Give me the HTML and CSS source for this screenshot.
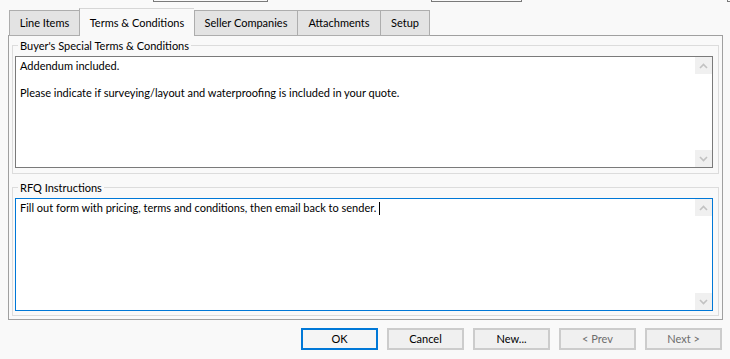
FILE: index.html
```html
<!DOCTYPE html>
<html lang="en">
<head>
    <meta charset="UTF-8">
    <title>RFQ - Terms &amp; Conditions</title>
    <link rel="stylesheet" href="styles.css">
</head>
<body>
    <div class="topbar">
        <div class="stub stub-a"></div>
        <div class="stub stub-b"></div>
        <div class="stub stub-c"></div>
    </div>

    <div class="tabs">
        <div class="tab-gap"></div>
        <div class="tab" style="width: 70px;">Line Items</div>
        <div class="tab active" style="width: 115px;">Terms &amp; Conditions</div>
        <div class="tab" style="width: 103px;">Seller Companies</div>
        <div class="tab" style="width: 83px;">Attachments</div>
        <div class="tab last" style="width: 50px;">Setup</div>
        <div class="tab-fill"></div>
    </div>

    <div class="panel">
        <fieldset class="group group-terms">
            <legend>Buyer's Special Terms &amp; Conditions</legend>
            <div class="memo">
                <div class="memo-text">Addendum included.<br><br>Please indicate if surveying/layout and waterproofing is included in your quote.</div>
                <div class="scroll">
                    <div class="arrow"><svg width="9" height="6" viewBox="0 0 9 6"><polyline points="1,5 4.5,1.5 8,5" fill="none" stroke="#c2c2c2" stroke-width="1.6"/></svg></div>
                    <div class="track"></div>
                    <div class="arrow"><svg width="9" height="6" viewBox="0 0 9 6"><polyline points="1,1 4.5,4.5 8,1" fill="none" stroke="#c2c2c2" stroke-width="1.6"/></svg></div>
                </div>
            </div>
        </fieldset>

        <fieldset class="group group-rfq">
            <legend>RFQ Instructions</legend>
            <div class="memo focused">
                <div class="memo-text">Fill out form with pricing, terms and conditions, then email back to sender. <span class="caret"></span></div>
                <div class="scroll">
                    <div class="arrow"><svg width="9" height="6" viewBox="0 0 9 6"><polyline points="1,5 4.5,1.5 8,5" fill="none" stroke="#c2c2c2" stroke-width="1.6"/></svg></div>
                    <div class="track"></div>
                    <div class="arrow"><svg width="9" height="6" viewBox="0 0 9 6"><polyline points="1,1 4.5,4.5 8,1" fill="none" stroke="#c2c2c2" stroke-width="1.6"/></svg></div>
                </div>
            </div>
        </fieldset>
    </div>

    <div class="buttons">
        <button class="btn default">OK</button>
        <button class="btn">Cancel</button>
        <button class="btn">New...</button>
        <button class="btn disabled">&lt; Prev</button>
        <button class="btn disabled">Next &gt;</button>
    </div>
</body>
</html>
```

FILE: styles.css
```css
body {
    margin: 0;
    background-color: #f9f9f9;
    font-family: Lato, "Liberation Sans", sans-serif;
    font-size: 11px;
    color: #000;
}
.topbar {
    display: flex;
    height: 2px;
    overflow: hidden;
}
.stub {
    height: 2px;
    box-sizing: border-box;
    border: 1px solid #7a7a7a;
    border-top: none;
    flex-shrink: 0;
}
.stub-a {
    margin-left: 153px;
    width: 115px;
}
.stub-b {
    margin-left: 163px;
    width: 91px;
}
.stub-c {
    margin-left: 205px;
    width: 20px;
}
.tabs {
    display: flex;
    align-items: flex-end;
    margin-top: 6px;
    height: 28px;
}
.tab-gap {
    width: 1px;
    margin-left: 8px;
    height: 0;
    border-bottom: 1px solid #a0a0a0;
    flex-shrink: 0;
}
.tab {
    box-sizing: border-box;
    height: 26px;
    border: 1px solid #adadad;
    border-right: none;
    background-color: #e3e3e3;
    text-align: center;
    line-height: 24px;
    flex-shrink: 0;
}
.tab.last {
    border-right: 1px solid #adadad;
}
.tab.active {
    height: 28px;
    background-color: #f9f9f9;
    border-color: #d6d6d6;
    border-left-color: #adadad;
    border-bottom: none;
    line-height: 27px;
}
.tab.active + .tab {
    border-left-color: #adadad;
}
.tab-fill {
    width: 293px;
    border-bottom: 1px solid #a0a0a0;
}
.panel {
    margin-left: 8px;
    width: 715px;
    height: 284px;
    box-sizing: border-box;
    border: 1px solid #a0a0a0;
    border-top: none;
    padding: 2px 3px 0 3px;
}
.group {
    margin: 0;
    padding: 0 5px 5px 2px;
    border: 1px solid #dcdcdc;
    width: 707px;
    box-sizing: border-box;
}
.group legend {
    margin-left: 3px;
    padding: 0 2px;
    line-height: 15px;
}
.group-rfq {
    margin-top: 6px;
    padding-bottom: 4px;
}
.memo {
    display: flex;
    background-color: #fff;
    border: 1px solid #7a7a7a;
    height: 112px;
    box-sizing: border-box;
    margin-top: 3px;
}
.memo.focused {
    border-color: #0078d7;
    height: 113px;
}
.memo-text {
    flex: 1;
    padding: 2px 4px;
    line-height: 13.5px;
}
.caret {
    display: inline-block;
    width: 1px;
    height: 13px;
    background-color: #000;
    vertical-align: -3px;
}
.scroll {
    width: 17px;
    display: flex;
    flex-direction: column;
}
.arrow {
    height: 17px;
    background-color: #f0f0f0;
    display: flex;
    align-items: center;
    justify-content: center;
}
.track {
    flex: 1;
}
.buttons {
    display: flex;
    justify-content: flex-end;
    gap: 9px;
    padding-right: 8px;
    margin-top: 8px;
}
.btn {
    width: 77px;
    height: 22px;
    box-sizing: border-box;
    border: 2px solid #cccccc;
    background-color: #f0f0f0;
    font-family: Lato, "Liberation Sans", sans-serif;
    font-size: 11px;
    color: #000;
    padding: 0 0 1px 0;
}
.btn.default {
    border-color: #0078d7;
    background-color: #f5f5f5;
}
.btn.disabled {
    color: #6d6d6d;
}
```
